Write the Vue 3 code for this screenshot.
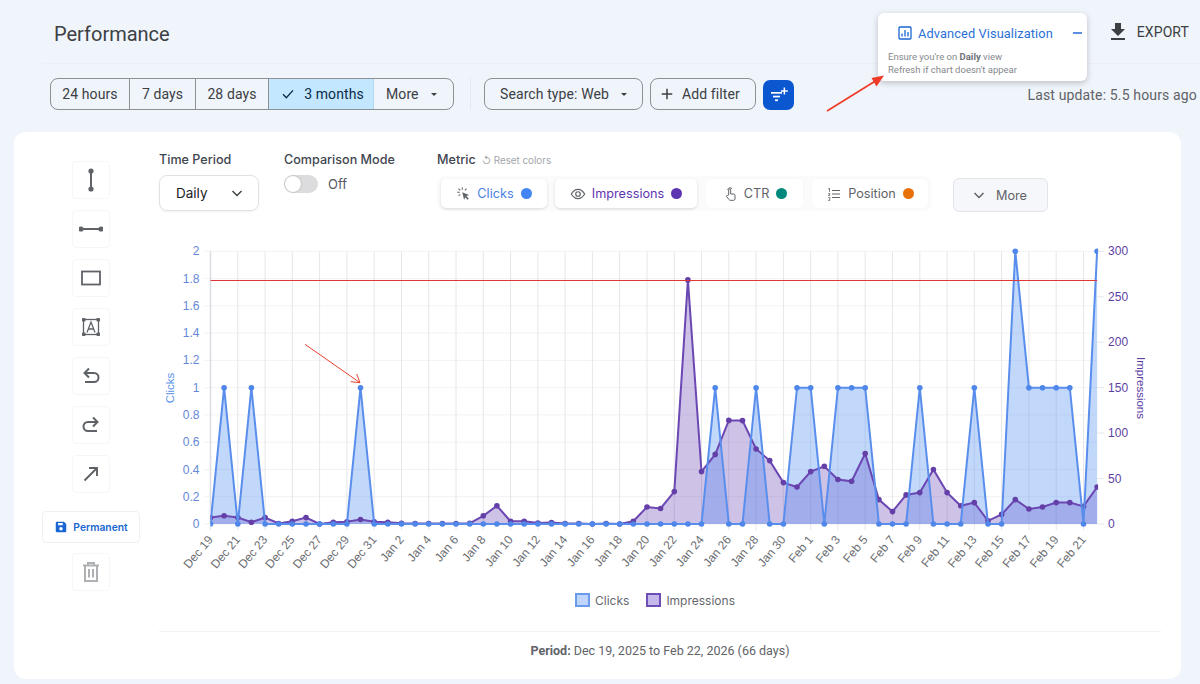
<script setup>
const clicks = Array(66).fill(0)
;[1, 3, 11, 37, 40, 43, 44, 46, 47, 48, 52, 56, 60, 61, 62, 63].forEach((i) => (clicks[i] = 1))
clicks[59] = 2
clicks[65] = 2
const impressions = [
  7, 9, 7, 2, 7, 0.5, 3, 7, 0, 2, 2.5, 5, 2.5, 2, 0.8, 0.5, 0.5, 0.5, 0.5, 0.8, 9, 20, 3, 3, 1, 1.5, 0.5, 0.5, 0, 0.5, 0, 3,
  18.7, 17, 35.6, 268.5, 57.6, 76.6, 114, 113.7, 82.5, 69.7, 45.5, 40.7, 57.6, 63.5, 49, 47, 77.4, 26.8, 13.6, 32, 34.5,
  60, 34.5, 20, 23.5, 3.5, 10.6, 26.8, 16.5, 18.7, 23.5, 23.5, 19.4, 40.7
]
const X0 = 51.5
const DX = 13.64
const Y0 = 286
const H = 272.7
const TOP = Y0 - H
const RIGHT = X0 + DX * 65
const x = (i) => +(X0 + DX * i).toFixed(1)
const yC = (v) => +(Y0 - (v / 2) * H).toFixed(1)
const yI = (v) => +(Y0 - (v / 300) * H).toFixed(1)

const line = (vals, fy) => vals.map((v, i) => `${x(i)},${fy(v)}`).join(' ')
const area = (vals, fy) => `${x(0)},${Y0} ${line(vals, fy)} ${x(65)},${Y0}`
const clickPts = clicks.map((v, i) => ({ cx: x(i), cy: yC(v) }))
const impPts = impressions.map((v, i) => ({ cx: x(i), cy: yI(v) }))
const clickLine = line(clicks, yC)
const clickArea = area(clicks, yC)
const impLine = line(impressions, yI)
const impArea = area(impressions, yI)

const months = [['Dec', 19, 31], ['Jan', 1, 31], ['Feb', 1, 22]]
const dates = []
months.forEach(([m, s, n]) => {
  for (let d = s; d <= n; d++) dates.push(`${m} ${d}`)
})
const ticks = dates
  .map((label, i) => ({ label, x: x(i) }))
  .filter((_, i) => i % 2 === 0)
const hLines = Array.from({ length: 11 }, (_, i) => {
  const v = (10 - i) * 0.2
  return { y: +(Y0 - (v / 2) * H).toFixed(1), label: i === 10 ? '0' : i === 0 ? '2' : i === 5 ? '1' : v.toFixed(1) }
})
const rightTicks = [0, 50, 100, 150, 200, 250, 300].map((v) => ({ v, y: yI(v) }))
const tools = ['v', 'h', 'rect', 'text', 'undo', 'redo', 'arrow']
</script>

<template>
  <div class="page">
    <header class="head">
      <h1 class="title">Performance</h1>
      <button class="export">
        <svg width="24" height="24" viewBox="0 0 24 24"><path fill="#3c4043" d="M19 9h-4V3H9v6H5l7 7 7-7zM5 18v2h14v-2H5z" /></svg>
        <span>EXPORT</span>
      </button>
    </header>

    <section class="filters">
      <div class="range">
        <span class="seg s1">24 hours</span>
        <span class="seg s2">7 days</span>
        <span class="seg s3">28 days</span>
        <span class="seg s4 on">
          <svg width="16" height="16" viewBox="0 0 24 24"><path fill="none" stroke="#0b2a4a" stroke-width="2" d="M4.5 12.5l5 5 10-11" /></svg>
          3 months
        </span>
        <span class="seg s5">More <i class="caret"></i></span>
      </div>
      <span class="vsep"></span>
      <span class="chip search">Search type: Web <i class="caret"></i></span>
      <span class="chip add">
        <svg width="18" height="18" viewBox="0 0 24 24"><path fill="#3c4043" d="M19 13h-6v6h-2v-6H5v-2h6V5h2v6h6z" /></svg>
        Add filter
      </span>
      <span class="fbtn">
        <svg width="20" height="20" viewBox="0 0 20 20" fill="#fff">
          <rect x="2" y="7" width="11" height="1.7" />
          <rect x="4" y="10.700" width="7" height="1.7" />
          <rect x="6" y="14.400" width="3" height="1.7" />
          <path d="M14.600 2.500h1.500v2.700h2.700v1.500h-2.700v2.700h-1.500V6.700h-2.700V5.200h2.700z" />
        </svg>
      </span>
      <span class="updated">Last update: 5.5 hours ago</span>
    </section>

    <main class="card">
      <aside class="tools">
        <button v-for="t in tools" :key="t" class="tool">
          <svg width="24" height="24" viewBox="0 0 24 24">
            <g v-if="t === 'v'" fill="#5f6368">
              <circle cx="12" cy="3" r="2.600" /><circle cx="12" cy="21" r="2.600" /><rect x="11" y="3" width="2" height="18" />
            </g>
            <g v-else-if="t === 'h'" fill="#5f6368">
              <circle cx="2" cy="12" r="2.600" /><circle cx="22" cy="12" r="2.600" /><rect x="2" y="11" width="20" height="2" />
            </g>
            <rect v-else-if="t === 'rect'" x="3" y="5.500" width="18" height="13" fill="none" stroke="#5f6368" stroke-width="1.800" />
            <g v-else-if="t === 'text'">
              <rect x="4.500" y="4.500" width="15" height="15" fill="none" stroke="#5f6368" stroke-width="1.300" />
              <rect x="3" y="3" width="3.500" height="3.500" rx=".8" fill="#5f6368" /><rect x="17.500" y="3" width="3.500" height="3.500" rx=".8" fill="#5f6368" />
              <rect x="3" y="17.500" width="3.500" height="3.500" rx=".8" fill="#5f6368" /><rect x="17.500" y="17.500" width="3.500" height="3.500" rx=".8" fill="#5f6368" />
              <path fill="none" stroke="#5f6368" stroke-width="1.300" d="M8 17.500L12 7l4 10.500M9.200 14h5.600" />
            </g>
            <path v-else-if="t === 'undo'" fill="none" stroke="#5f6368" stroke-width="2" d="M10 4.500L5.500 9 10 13.500M5.500 9H15a4.500 4.500 0 0 1 0 9H6" />
            <path v-else-if="t === 'redo'" fill="none" stroke="#5f6368" stroke-width="2" d="M14 4.500L18.500 9 14 13.500M18.500 9H9a4.500 4.500 0 0 0 0 9h9" />
            <path v-else fill="none" stroke="#5f6368" stroke-width="1.900" d="M5.500 18.500L17.500 6.500M10 6h8v8" />
          </svg>
        </button>
        <button class="perm">
          <svg width="14" height="14" viewBox="0 0 24 24"><path fill="#1a66d2" d="M17 3H5a2 2 0 0 0-2 2v14a2 2 0 0 0 2 2h14a2 2 0 0 0 2-2V7l-4-4zM7 5h8v4H7V5zm5 13a3 3 0 1 1 0-6 3 3 0 0 1 0 6z" /></svg>
          Permanent
        </button>
        <button class="tool trash">
          <svg width="24" height="24" viewBox="0 0 24 24" fill="none" stroke="#aeb0b4" stroke-width="2">
            <path d="M4 5.500h16M9 5.500V3h6v2.500M6 5.500V21h12V5.500M10 9v8.500M14 9v8.500" />
          </svg>
        </button>
      </aside>

      <div class="content">
        <div class="controls">
          <div class="ctl period">
            <label>Time Period</label>
            <div class="select">
              <span>Daily</span>
              <svg width="14" height="14" viewBox="0 0 14 14"><path fill="none" stroke="#3c4043" stroke-width="1.400" d="M2.500 5l4.500 4.500L11.500 5" /></svg>
            </div>
          </div>
          <div class="ctl compare">
            <label>Comparison Mode</label>
            <div class="toggle-row">
              <span class="toggle"><i></i></span>
              <span class="off">Off</span>
            </div>
          </div>
          <div class="ctl metric">
            <div class="metric-head">
              <label>Metric</label>
              <span class="reset">↺ Reset colors</span>
            </div>
            <div class="metric-row">
              <div class="metrics">
                <span class="m m1 blue">
                  <svg width="15" height="15" viewBox="0 0 24 24" fill="#5f6368">
                    <path d="M10 10l11 4.500-4.500 1.500 4 4-2 2-4-4-1.500 4.500z" />
                    <path d="M9.200 2h1.600v4H9.200zM2 9.200h4v1.600H2zM3.500 4.600l1.100-1.100 2.800 2.800-1.100 1.100zM13.600 6.300l2.800-2.800 1.100 1.100-2.800 2.800zM6.300 12.600l1.100 1.100-2.800 2.800-1.100-1.100z" />
                  </svg>
                  Clicks <i class="dot" style="background:#4285f4"></i>
                </span>
                <span class="m m2 purple">
                  <svg width="16" height="16" viewBox="0 0 24 24" fill="none" stroke="#5f6368" stroke-width="1.800">
                    <path d="M2 12c3-5 6.300-7 10-7s7 2 10 7c-3 5-6.300 7-10 7s-7-2-10-7z" /><circle cx="12" cy="12" r="3.400" />
                  </svg>
                  Impressions <i class="dot" style="background:#5e35b1"></i>
                </span>
                <span class="m m3">
                  <svg width="16" height="16" viewBox="0 0 24 24" fill="none" stroke="#5f6368" stroke-width="1.500">
                    <path d="M8.500 5.800a3.600 3.600 0 0 1 6.600-1.500" />
                    <path d="M10 13.500V6a1.500 1.500 0 0 1 3 0v6h4.500c1.200 0 2 .9 2 2v5.500c0 1.100-.9 2-2 2h-5c-.8 0-1.400-.3-1.900-1L7 16c-.8-1 .4-2.600 1.600-1.800z" />
                  </svg>
                  CTR <i class="dot" style="background:#00897b"></i>
                </span>
                <span class="m m4">
                  <svg width="16" height="16" viewBox="0 0 24 24" fill="#5f6368">
                    <path d="M9 6h12v1.600H9zM9 11.200h12v1.600H9zM9 16.400h12v1.600H9z" />
                    <path d="M3.500 3.500H6v5H4.800V4.700H3.500zM3.300 11h3v1l-1.800 2h1.800v1.100H3.200v-1l1.800-2H3.300zM3.300 17h3v5h-3v-1h1.900v-1H4v-1h1.200v-1H3.300z" />
                  </svg>
                  Position <i class="dot" style="background:#e8710a"></i>
                </span>
              </div>
              <button class="more">
                <svg width="14" height="14" viewBox="0 0 14 14"><path fill="none" stroke="#5f6368" stroke-width="1.500" d="M2.500 5l4.500 4.500L11.500 5" /></svg>
                More
              </button>
            </div>
          </div>
        </div>

        <svg class="chart" width="1001" height="350" viewBox="0 0 1001 350">
          <defs>
            <clipPath id="plot-clip"><rect :x="X0" :y="TOP - 4" :width="RIGHT - X0 + 1" :height="H + 8" /></clipPath>
          </defs>
          <g class="grid">
            <line v-for="h in hLines" :key="h.y" :x1="X0 - 6" :x2="RIGHT" :y1="h.y" :y2="h.y" stroke="#f2f2f4" />
            <line v-for="t in ticks" :key="t.x" :x1="t.x" :x2="t.x" :y1="TOP" :y2="Y0 + 6" stroke="#e6e6eb" />
            <line :x1="X0" :x2="X0" :y1="TOP" :y2="Y0" stroke="#dcdce2" stroke-width="1.500" />
            <line v-for="r in rightTicks" :key="r.v" :x1="RIGHT" :x2="RIGHT + 7" :y1="r.y" :y2="r.y" stroke="#e6e6eb" />
          </g>
          <g clip-path="url(#plot-clip)">
            <polygon :points="impArea" fill="rgba(94,53,177,.3)" />
            <polygon :points="clickArea" fill="rgba(66,133,244,.32)" />
            <polyline :points="impLine" fill="none" stroke="#6b47b3" stroke-width="2" />
            <circle v-for="(p, i) in impPts" :key="'i' + i" :cx="p.cx" :cy="p.cy" r="2.800" fill="#643fa8" />
            <polyline :points="clickLine" fill="none" stroke="#5a8eec" stroke-width="2" />
            <circle v-for="(p, i) in clickPts" :key="'c' + i" :cx="p.cx" :cy="p.cy" r="2.800" fill="#4f86ea" />
          </g>
          <line :x1="X0" :x2="RIGHT" y1="42.500" y2="42.500" stroke="#e03636" stroke-width="1.200" />
          <path d="M146 106.300L201 144.700M197.700 136L201 144.700L191.700 143.700" fill="none" stroke="#e8432f" stroke-width="1" />
          <text v-for="h in hLines" :key="'l' + h.y" class="axis left" :x="X0 - 11" :y="h.y + 4" text-anchor="end">{{ h.label }}</text>
          <text v-for="r in rightTicks" :key="'r' + r.v" class="axis right" :x="RIGHT + 11" :y="r.y + 4">{{ r.v }}</text>
          <text class="ytitle left" text-anchor="middle" transform="translate(14.500 150) rotate(-90)">Clicks</text>
          <text class="ytitle right" text-anchor="middle" transform="translate(978 150) rotate(90)">Impressions</text>
          <text v-for="t in ticks" :key="'t' + t.x" class="date" text-anchor="end" :transform="`translate(${t.x + 3} ${Y0 + 16}) rotate(-50)`">{{ t.label }}</text>
        </svg>

        <div class="legend">
          <span class="item"><i class="sw sw-c"></i>Clicks</span>
          <span class="item"><i class="sw sw-i"></i>Impressions</span>
        </div>
        <footer class="foot"><b>Period:</b> Dec 19, 2025 to Feb 22, 2026 (66 days)</footer>
      </div>
    </main>

    <div class="popup">
      <div class="pop-head">
        <svg width="16" height="16" viewBox="0 0 16 16" fill="none" stroke="#1a66d2" stroke-width="1.300">
          <rect x="2" y="2" width="12" height="12" rx="1" />
          <path d="M5 11.500V8.500M8 11.500V5M11 11.500V7" />
        </svg>
        <span class="pop-title">Advanced Visualization</span>
        <span class="pop-min"></span>
      </div>
      <p>Ensure you're on <b>Daily</b> view</p>
      <p>Refresh if chart doesn't appear</p>
    </div>
    <svg class="pointer" width="70" height="50" viewBox="0 0 70 50">
      <path d="M2 44L52 13" stroke="#ee3a26" stroke-width="1.600" />
      <path d="M59 8.500L46.500 11 51.500 19.500z" fill="#ee3a26" />
    </svg>
  </div>
</template>

<style>
html, body { margin: 0; background: #f0f4fb; }
</style>

<style scoped>
.page {
  position: relative;
  width: 1200px;
  height: 684px;
  overflow: hidden;
  background: #f0f4fb;
  font-family: Roboto, "Liberation Sans", sans-serif;
  color: #3c4043;
}
button { font: inherit; }
.head {
  height: 64px;
  margin-left: 42px;
  padding-left: 12px;
  padding-top: 4px;
  box-sizing: border-box;
  display: flex;
  align-items: center;
  justify-content: space-between;
  border-bottom: 1px solid #eceff6;
}
.title { margin: 0; font-size: 20px; font-weight: 400; color: #3c4043; }
.export {
  display: flex; align-items: center; gap: 7px; border: 0; background: none; padding: 0; margin-right: 11px; margin-top: -3px;
  font-size: 14px; font-weight: 400; letter-spacing: .1px; color: #3c4043;
}
.filters { display: flex; align-items: center; padding: 14px 0 0 50px; height: 32px; }
.range {
  display: flex; height: 32px; width: 404px; box-sizing: border-box; border: 1px solid #8d9095; border-radius: 8px;
  overflow: hidden; font-size: 14px; letter-spacing: .1px;
}
.seg {
  display: flex; align-items: center; justify-content: center; gap: 8px; box-sizing: border-box; border-right: 1px solid #8d9095; color: #3c4043;
}
.s1 { width: 79px; } .s2 { width: 66px; } .s3 { width: 73px; } .s4 { width: 105px; padding-left: 2px; } .s5 { flex: 1; border-right: 0; gap: 12px; justify-content: flex-start; padding-left: 12px; }
.on { background: #c2e7ff; color: #0b2a4a; border-right-color: #b4d8f0; }
.caret { width: 0; height: 0; border: 3.500px solid transparent; border-top-color: #3c4043; border-bottom: 0; display: inline-block; }
.vsep { width: 1px; height: 32px; background: #e6e9f1; margin: 0 13px 0 16px; }
.chip {
  display: flex; align-items: center; height: 32px; box-sizing: border-box; border: 1px solid #8d9095; border-radius: 8px;
  font-size: 14px; letter-spacing: .1px; color: #3c4043;
}
.search { width: 159px; padding-left: 15px; gap: 12px; }
.add { width: 106px; margin-left: 7px; padding-left: 7px; gap: 6px; }
.fbtn {
  width: 31px; height: 30px; margin-left: 7px; margin-top: 1px; border-radius: 7px; background: #0b57d0;
  display: flex; align-items: center; justify-content: center;
}
.updated { margin-left: auto; margin-right: 3px; margin-top: 1px; font-size: 14px; letter-spacing: .15px; color: #5f6368; }
.card {
  display: flex; box-sizing: border-box; width: 1167px; height: 547px; margin: 22px 0 0 14px; background: #fff; border-radius: 12px;
}
.tools { width: 145px; flex: none; display: flex; flex-direction: column; align-items: center; padding-top: 29px; gap: 11px; box-sizing: border-box; padding-left: 9px; }
.tool {
  width: 38px; height: 38px; flex: none; padding: 0; background: #fff; border: 1px solid #f6f6f7; border-radius: 4px;
  display: flex; align-items: center; justify-content: center;
}
.perm {
  width: 98px; height: 32px; flex: none; margin-top: 7px; padding: 0; display: flex; align-items: center; justify-content: center; gap: 5px;
  background: #fff; border: 1px solid #f0f0f2; border-radius: 4px;
  font-family: Inter, sans-serif; font-size: 10.300px; font-weight: 600; color: #1a66d2;
}
.trash { margin-top: -1px; }
.content { flex: none; width: 1001px; display: flex; flex-direction: column; font-family: Inter, sans-serif; }
.controls { display: flex; padding-top: 20px; height: 87px; box-sizing: border-box; }
.ctl label { display: block; font-size: 12.600px; font-weight: 500; line-height: 16px; color: #3f4650; }
.period { width: 125px; }
.select {
  margin-top: 7px; width: 100px; height: 36px; box-sizing: border-box; padding: 0 14px 0 16px; border: 1px solid #e0e1e3; border-radius: 8px;
  box-shadow: 0 1px 2px rgba(0,0,0,.06);
  display: flex; align-items: center; justify-content: space-between; font-size: 13.500px; color: #202124;
}
.compare { width: 153px; }
.toggle-row { display: flex; align-items: center; gap: 10px; margin-top: 7px; }
.toggle { width: 34px; height: 18px; border-radius: 9px; background: #dcdcde; position: relative; display: block; }
.toggle i { position: absolute; left: 1px; top: 1px; width: 16px; height: 16px; border-radius: 50%; background: #fff; box-shadow: 0 0 2px rgba(0,0,0,.3); }
.off { font-size: 13px; color: #555a61; }
.metric-head { display: flex; align-items: baseline; gap: 6px; }
.reset { font-size: 9.800px; color: #a3a6ab; }
.metric-row { display: flex; align-items: flex-start; gap: 21px; margin-top: 8px; }
.metrics {
  display: flex; gap: 8px; width: 495px; height: 35px; box-sizing: border-box; padding: 2px 4px; background: #fbfbfc; border-radius: 8px; align-items: center;
}
.m {
  display: flex; align-items: center; gap: 6px; height: 29px; box-sizing: border-box; justify-content: center; background: #fff; border-radius: 5px;
  font-size: 12.700px; color: #5f6368;
}
.m1 { width: 106px; box-shadow: 0 1px 3px rgba(0,0,0,.14); }
.m2 { width: 142px; box-shadow: 0 1px 3px rgba(0,0,0,.14); }
.m3 { width: 97px; margin-left: 1px; box-shadow: 0 0 2px rgba(0,0,0,.04); }
.m4 { width: 116px; margin-left: 1px; box-shadow: 0 0 2px rgba(0,0,0,.04); }
.blue { color: #4a82e4; }
.purple { color: #5e35b1; }
.dot { width: 11px; height: 11px; border-radius: 50%; margin-left: 1px; }
.more {
  width: 95px; height: 34px; margin-top: 2px; display: flex; align-items: center; justify-content: center; gap: 10px;
  background: #f6f7fa; border: 1px solid #e2e4e8; border-radius: 6px; font-size: 12.700px; color: #5f6368; padding: 0 2px 0 0;
}
.chart { display: block; margin-top: 19px; flex: none; }
.axis { font-family: "Liberation Sans", sans-serif; font-size: 12px; }
.axis.left { fill: #6488d6; }
.axis.right { fill: #5c3fa3; }
.ytitle { font-family: "Liberation Sans", sans-serif; font-size: 11.500px; }
.ytitle.left { fill: #5b93ea; }
.ytitle.right { fill: #5c3fa3; }
.date { font-family: "Liberation Sans", sans-serif; font-size: 12px; fill: #6b6d72; }
.legend { display: flex; justify-content: center; gap: 17px; height: 20px; margin-top: 2px; margin-left: -9px; font-size: 12px; color: #66686d; font-family: Inter, sans-serif; }
.item { display: flex; align-items: center; gap: 5px; }
.sw { width: 15px; height: 14px; box-sizing: border-box; border: 2px solid; display: block; }
.sw-c { background: #c0d5fb; border-color: #6d9bec; }
.sw-i { background: #c6b8ea; border-color: #6f4fb5; }
.foot {
  margin-top: 21px; margin-right: -1px; padding-top: 11px; border-top: 1px solid #f1f2f4; text-align: center; font-family: Roboto, sans-serif; font-size: 12.500px; color: #5f6368;
}
.foot b { font-weight: 700; }
.popup {
  position: absolute; left: 878px; top: 13px; width: 209px; height: 68px; box-sizing: border-box; padding: 12px 10px 0; background: #fff;
  border-radius: 6px; box-shadow: 0 2px 6px rgba(0,0,0,.22); font-family: Roboto, sans-serif;
}
.pop-head { display: flex; align-items: center; gap: 5px; padding-left: 9px; height: 16px; margin-bottom: 9px; }
.pop-title { font-size: 12.800px; color: #2b6fd6; font-weight: 400; letter-spacing: .1px; white-space: nowrap; }
.pop-min { margin-left: auto; margin-right: -5px; width: 9px; height: 1.500px; background: #5a8fe0; display: block; }
.popup p { margin: 0; font-size: 9.500px; line-height: 13px; color: #85888d; }
.popup p b { color: #6f7277; }
.pointer { position: absolute; left: 825px; top: 67px; }
</style>
